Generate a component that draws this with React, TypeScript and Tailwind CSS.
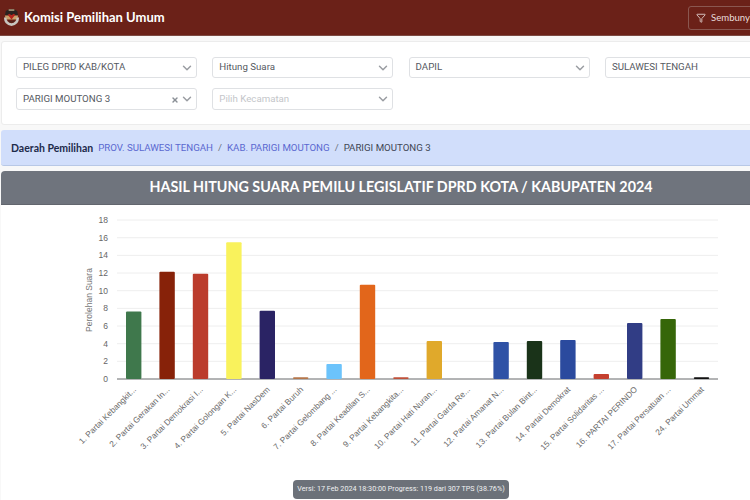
import React from 'react';
import { ChevronDown, Filter, X } from 'lucide-react';

const parties = [
  { label: '1. Partai Kebangkit...', value: 7.65, color: '#3f784c' },
  { label: '2. Partai Gerakan In...', value: 12.15, color: '#872209' },
  { label: '3. Partai Demokrasi I...', value: 11.93, color: '#bb3c2c' },
  { label: '4. Partai Golongan K...', value: 15.5, color: '#f9f25c' },
  { label: '5. Partai NasDem', value: 7.72, color: '#2a2364' },
  { label: '6. Partai Buruh', value: 0.2, color: '#b5764a' },
  { label: '7. Partai Gelombang ...', value: 1.7, color: '#6cc3fb' },
  { label: '8. Partai Keadilan S...', value: 10.68, color: '#e2661b' },
  { label: '9. Partai Kebangkita...', value: 0.2, color: '#c0503a' },
  { label: '10. Partai Hati Nuran...', value: 4.3, color: '#e0a92b' },
  { label: '11. Partai Garda Re...', value: 0, color: '#999999' },
  { label: '12. Partai Amanat N...', value: 4.2, color: '#2f52a6' },
  { label: '13. Partai Bulan Bint...', value: 4.3, color: '#1a3319' },
  { label: '14. Partai Demokrat', value: 4.43, color: '#2b4a9e' },
  { label: '15. Partai Solidaritas ...', value: 0.57, color: '#c5402f' },
  { label: '16. PARTAI PERINDO', value: 6.33, color: '#313d85' },
  { label: '17. Partai Persatuan ...', value: 6.8, color: '#366609' },
  { label: '24. Partai Ummat', value: 0.2, color: '#111111' },
];

const ticks = [0, 2, 4, 6, 8, 10, 12, 14, 16, 18];
const BASE_Y = 379;
const UNIT = 8.83;
const LEFT = 117;
const STEP = 33.4;

const SelectBox = ({
  text,
  placeholder,
  clearable,
  tall,
}: {
  text: string;
  placeholder?: boolean;
  clearable?: boolean;
  tall?: boolean;
}) => (
  <div
    className={`flex items-center justify-between bg-white border border-[#dfe1e4] rounded-[3px] pl-[6px] pr-[2px] ${
      tall ? 'h-[22px]' : 'h-[21px]'
    }`}
  >
    <span className={`text-[9.7px] ${placeholder ? 'text-[#c4c6ca]' : 'text-[#55595f]'}`}>{text}</span>
    <span className="flex items-center gap-[1px]">
      {clearable && <X className="w-[8px] h-[8px] text-[#8a8f96] mt-[2px]" strokeWidth={4} />}
      <ChevronDown className="w-[14px] h-[14px] text-[#9a9da2]" strokeWidth={2.5} />
    </span>
  </div>
);

const KpuLogo = () => (
  <svg viewBox="0 0 18 20" className="w-[17px] h-[19px]">
    <path d="M3 3 Q9 -1 15 3 L16 8 L2 8 Z" fill="#2a2320" />
    <rect x="6" y="1.5" width="6" height="1.2" fill="#d8c9a0" />
    <path d="M2 8 L16 8 L15 12 L3 12 Z" fill="#c9a06a" />
    <path d="M5 7 L9 12 L13 7 L11 6 L9 8 L7 6 Z" fill="#b3241c" />
    <path d="M1 10 Q1 18 9 19 Q17 18 17 10 L14.5 10 Q14 15.5 9 16 Q4 15.5 3.5 10 Z" fill="#c8c6c0" />
    <path d="M5.5 12 Q9 17 12.5 12 L11 15 L7 15 Z" fill="#3b2a22" />
  </svg>
);

const VoteChart = () => (
  <svg viewBox="0 205 802 295" width={802} height={295} className="block font-['Liberation_Sans',Arial,sans-serif]">
    {ticks.map((t) => {
      const y = BASE_Y - t * UNIT;
      return (
        <g key={t}>
          <line x1={LEFT} x2={718} y1={y} y2={y} stroke={t === 0 ? '#66686b' : '#eeeeee'} strokeWidth={1} />
          <text x={108} y={y + 3} textAnchor="end" className="fill-[#666666] text-[8.5px]">
            {t}
          </text>
        </g>
      );
    })}
    <text transform="translate(92 300) rotate(-90)" textAnchor="middle" className="fill-[#777777] text-[8.5px]">
      Perolehan Suara
    </text>
    {parties.map((p, i) => {
      const cx = LEFT + STEP * i + STEP / 2;
      const h = p.value * UNIT;
      return (
        <g key={p.label}>
          {h > 0 && <rect x={cx - 7.7} y={BASE_Y - h} width={15.4} height={h} rx={1} fill={p.color} />}
          <text
            transform={`translate(${cx + 3} 390) rotate(-45)`}
            textAnchor="end"
            className="fill-[#6a6a6a] text-[8.3px]"
          >
            {p.label}
          </text>
        </g>
      );
    })}
  </svg>
);

export default function App() {
  return (
    <div className="relative w-[750px] h-[500px] overflow-hidden bg-[#f8f8f8] font-['Roboto',sans-serif]">
      <div className="w-[802px] flex flex-col">
        {/* Navbar */}
        <div className="h-[36px] bg-[#6b2118] flex items-center justify-between pl-[3px] pr-[12px] border-b border-[#7d4a42]">
          <div className="flex items-center gap-[4px]">
            <KpuLogo />
            <span className="text-white text-[13px] font-bold font-['Lato',sans-serif]">Komisi Pemilihan Umum</span>
          </div>
          <button className="flex items-center gap-[5px] h-[24px] px-[7px] mt-[1px] w-[102px] border border-[#8a5750] rounded-[3px] text-[#e8dcda] text-[9.6px] font-['Lato',sans-serif]">
            <Filter className="w-[10px] h-[10px]" />
            Sembunyikan
          </button>
        </div>

        {/* Filter card */}
        <div className="mt-[5px] mx-[1px] h-[84px] bg-white border border-[#ececec] rounded-[3px] px-[14px] pt-[15px]">
          <div className="grid grid-cols-[repeat(4,181px)] gap-x-[15.3px] gap-y-[10px]">
            <SelectBox text="PILEG DPRD KAB/KOTA" />
            <SelectBox text="Hitung Suara" />
            <SelectBox text="DAPIL" />
            <SelectBox text="SULAWESI TENGAH" />
            <SelectBox text="PARIGI MOUTONG 3" clearable tall />
            <SelectBox text="Pilih Kecamatan" placeholder tall />
          </div>
        </div>

        {/* Breadcrumb */}
        <div className="mt-[5px] mx-[1px] h-[36px] bg-[#d1defb] border-b border-[#b8c8e6] rounded-[3px] flex items-center pl-[10px] pt-[2px] text-[9.7px]">
          <span className="font-bold text-[10.5px] text-[#1d2a4a] font-['Lato',sans-serif]">Daerah Pemilihan</span>
          <span className="ml-[5px] text-[#5a68d0]">PROV. SULAWESI TENGAH</span>
          <span className="mx-[5px] text-[#6b7280]">/</span>
          <span className="text-[#5a68d0]">KAB. PARIGI MOUTONG</span>
          <span className="mx-[5px] text-[#6b7280]">/</span>
          <span className="text-[#3f4654]">PARIGI MOUTONG 3</span>
        </div>

        {/* Chart card */}
        <div className="mt-[5px] mx-[1px] bg-white rounded-t-[4px] overflow-hidden">
          <div className="h-[34px] bg-[#6f747d] flex items-center justify-center border-b border-[#62666e] pb-[2px]">
            <span className="text-white text-[14.3px] font-bold font-['Lato',sans-serif]">
              HASIL HITUNG SUARA PEMILU LEGISLATIF DPRD KOTA / KABUPATEN 2024
            </span>
          </div>
          <div className="-ml-[1px]">
            <VoteChart />
          </div>
        </div>
      </div>

      {/* Version badge */}
      <div className="absolute left-[293px] top-[480px] w-[216px] h-[19px] bg-[#6c7179] rounded-[4px] flex items-center justify-center text-[7.2px] text-[#f0f1f3] whitespace-nowrap">
        Versi: 17 Feb 2024 18:30:00 Progress: 119 dari 307 TPS (38.76%)
      </div>
    </div>
  );
}
